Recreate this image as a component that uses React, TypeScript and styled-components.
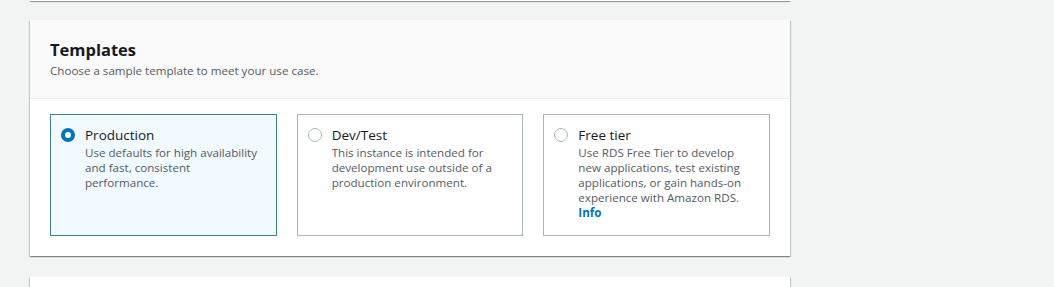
import * as React from 'react';
import styled, { createGlobalStyle } from 'styled-components';

const GlobalStyle = createGlobalStyle`
  html, body {
    margin: 0;
    padding: 0;
    background: #f2f3f3;
  }
  body {
    font-family: 'Open Sans', 'Noto Sans', sans-serif;
    color: #16191f;
  }
`;

const CARD_SHADOW =
  '0 1px 1px 0 rgba(0, 28, 36, 0.3), 1px 1px 1px 0 rgba(0, 28, 36, 0.15), -1px 1px 1px 0 rgba(0, 28, 36, 0.15)';

const Page = styled.div`
  display: flex;
  flex-direction: column;
  padding: 0 0 0 30px;
  width: 760px;
`;

const Stub = styled.div<{ top?: boolean }>`
  background: #ffffff;
  height: ${(p) => (p.top ? '1px' : '12px')};
  margin: ${(p) => (p.top ? '0 0 19px' : '21px 0 0')};
  box-shadow: ${CARD_SHADOW};
`;

const Card = styled.section`
  background: #ffffff;
  box-shadow: ${CARD_SHADOW};
`;

const CardHeader = styled.header`
  background: #fafafa;
  border-bottom: 1px solid #eaeded;
  padding: 19px 20px 19px;
  display: flex;
  flex-direction: column;
  gap: 3px;
`;

const Title = styled.h2`
  margin: 0;
  font-size: 16.5px;
  line-height: 21px;
  font-weight: 700;
  color: #16191f;
`;

const Subtitle = styled.p`
  margin: 0;
  font-size: 11.6px;
  line-height: 16px;
  color: #545b64;
`;

const CardBody = styled.div`
  padding: 15px 20px 20px;
  display: grid;
  grid-template-columns: repeat(3, 1fr);
  gap: 20px;
`;

const Tile = styled.label<{ selected: boolean }>`
  display: flex;
  gap: 10px;
  padding: 10px 14px 15px 10px;
  border: 1px solid ${(p) => (p.selected ? '#3a8294' : '#aab7b8')};
  background: ${(p) => (p.selected ? '#f1faff' : '#ffffff')};
  cursor: pointer;
`;

const Radio = styled.span<{ checked: boolean }>`
  flex: none;
  box-sizing: border-box;
  width: 14px;
  height: 14px;
  margin-top: 3px;
  border-radius: 50%;
  background: #ffffff;
  border: ${(p) => (p.checked ? '4px solid #0073bb' : '1px solid #aab7b8')};
`;

const TileText = styled.div`
  display: flex;
  flex-direction: column;
`;

const TileLabel = styled.span`
  font-size: 13.5px;
  line-height: 20px;
  color: #16191f;
`;

const TileDesc = styled.span`
  font-size: 11.6px;
  line-height: 15px;
  color: #545b64;
`;

const InfoLink = styled.a`
  display: block;
  font-weight: 700;
  color: #0073bb;
  text-decoration: none;
`;

type Template = {
  id: string;
  label: string;
  description: string;
  info?: boolean;
};

const templates: Template[] = [
  {
    id: 'production',
    label: 'Production',
    description: 'Use defaults for high availability and fast, consistent performance.',
  },
  {
    id: 'devtest',
    label: 'Dev/Test',
    description: 'This instance is intended for development use outside of a production environment.',
  },
  {
    id: 'free',
    label: 'Free tier',
    description:
      'Use RDS Free Tier to develop new applications, test existing applications, or gain hands-on experience with Amazon RDS.',
    info: true,
  },
];

export default function App() {
  const [selected, setSelected] = React.useState('production');

  return (
    <>
      <GlobalStyle />
      <Page>
        <Stub top />
        <Card>
          <CardHeader>
            <Title>Templates</Title>
            <Subtitle>Choose a sample template to meet your use case.</Subtitle>
          </CardHeader>
          <CardBody>
            {templates.map((t) => (
              <Tile key={t.id} selected={selected === t.id} onClick={() => setSelected(t.id)}>
                <Radio checked={selected === t.id} />
                <TileText>
                  <TileLabel>{t.label}</TileLabel>
                  <TileDesc>
                    {t.description}
                    {t.info && <InfoLink href="#">Info</InfoLink>}
                  </TileDesc>
                </TileText>
              </Tile>
            ))}
          </CardBody>
        </Card>
        <Stub />
      </Page>
    </>
  );
}
